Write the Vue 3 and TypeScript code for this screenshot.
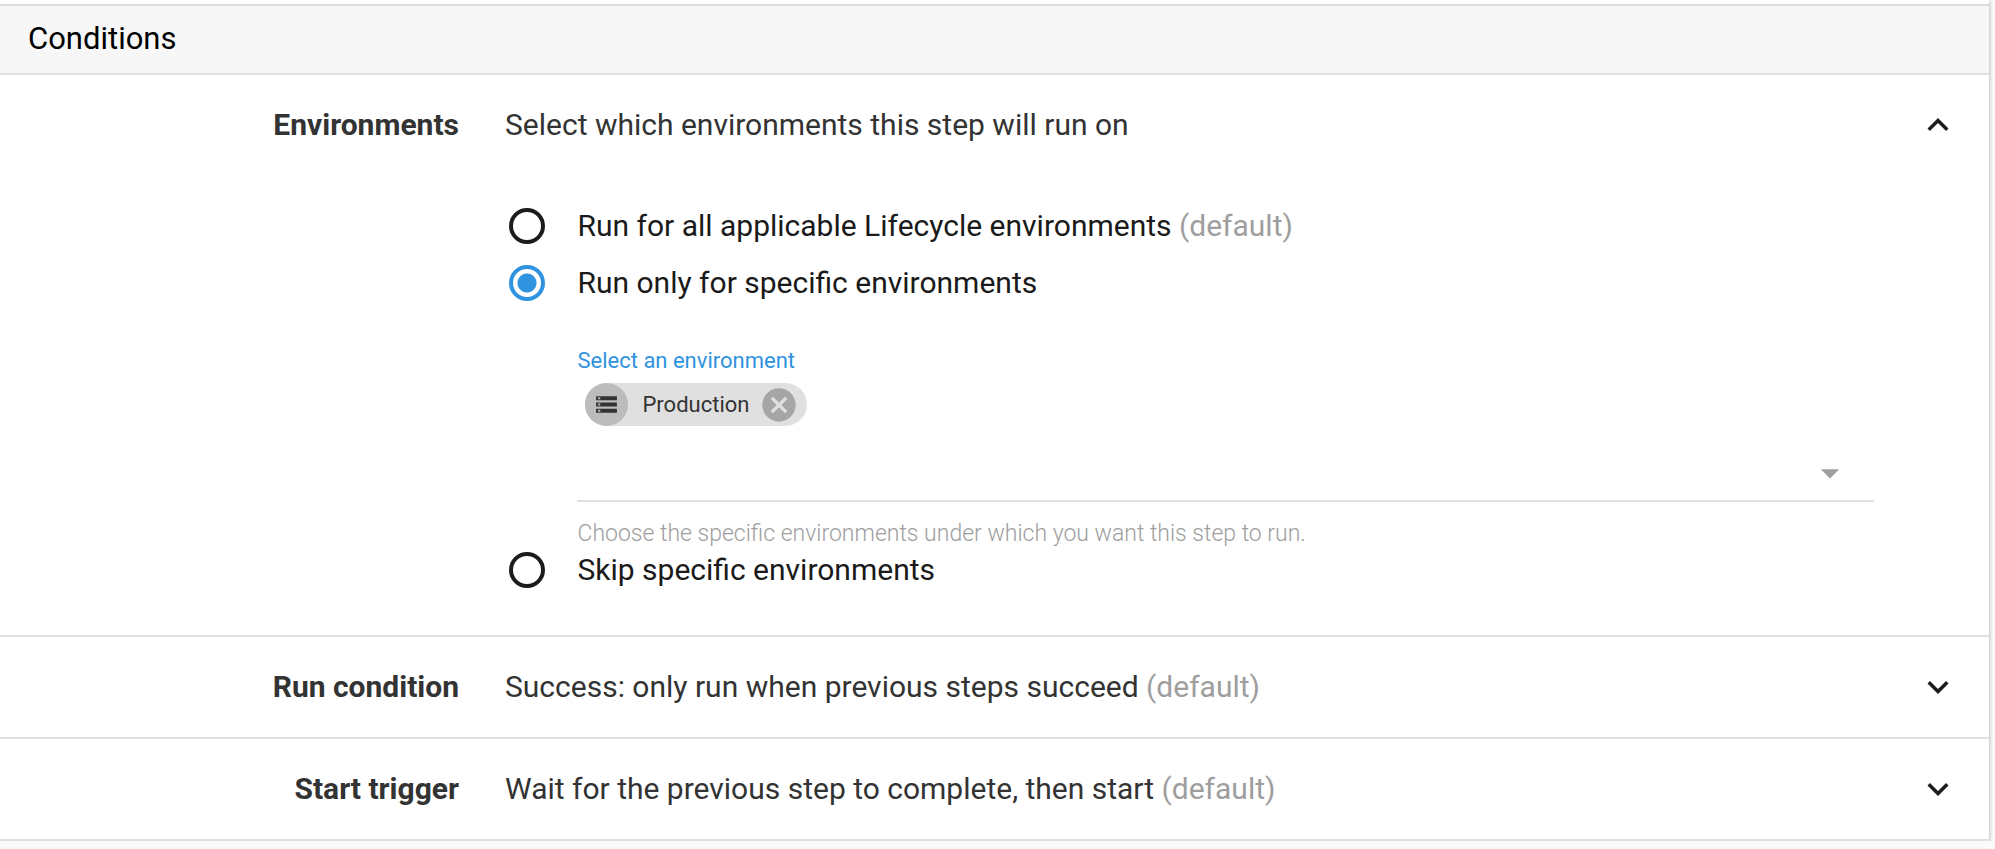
<script setup lang="ts">
import { computed, ref } from 'vue'

type Scope = 'all' | 'only' | 'skip'

interface ClosedSection {
  id: string
  title: string
  summary: string
}

const scope = ref<Scope>('only')
const expanded = ref(true)
const options = ['Production']
const selected = ref<string[]>(['Production'])
const pending = ref('')

const available = computed(() => options.filter((name) => !selected.value.includes(name)))

const closedSections: ClosedSection[] = [
  { id: 'run-condition', title: 'Run condition', summary: 'Success: only run when previous steps succeed' },
  { id: 'start-trigger', title: 'Start trigger', summary: 'Wait for the previous step to complete, then start' },
]

function addEnvironment(): void {
  if (pending.value) selected.value.push(pending.value)
  pending.value = ''
}

function removeEnvironment(name: string): void {
  selected.value = selected.value.filter((item) => item !== name)
}
</script>

<template>
  <main class="card">
    <h1 class="heading">Conditions</h1>

    <section class="section">
      <div class="row">
        <h2 class="title">Environments</h2>
        <p class="summary">Select which environments this step will run on</p>
        <button
          class="toggle"
          type="button"
          aria-label="Toggle Environments"
          :aria-expanded="expanded"
          @click="expanded = !expanded"
        >
          <svg class="icon" viewBox="0 0 24 24" aria-hidden="true">
            <path v-if="expanded" d="M12 8l-6 6 1.41 1.41L12 10.83l4.59 4.58L18 14z" />
            <path v-else d="M16.59 8.59L12 13.17 7.41 8.59 6 10l6 6 6-6z" />
          </svg>
        </button>
      </div>

      <div v-if="expanded" class="body">
        <label class="option">
          <input v-model="scope" class="radio" type="radio" name="scope" value="all" />
          <span>Run for all applicable Lifecycle environments <span class="muted">(default)</span></span>
        </label>
        <label class="option">
          <input v-model="scope" class="radio" type="radio" name="scope" value="only" />
          <span>Run only for specific environments</span>
        </label>

        <div v-if="scope !== 'all'" class="field">
          <label class="field-label" for="environment">Select an environment</label>
          <ul class="chips">
            <li v-for="name in selected" :key="name" class="chip">
              <span class="avatar">
                <svg class="storage" viewBox="0 0 24 24" aria-hidden="true">
                  <path d="M2 20h20v-4H2v4zm2-3h2v2H4v-2zM2 4v4h20V4H2zm4 3H4V5h2v2zm-4 7h20v-4H2v4zm2-3h2v2H4v-2z" />
                </svg>
              </span>
              <span class="chip-name">{{ name }}</span>
              <button class="remove" type="button" :aria-label="`Remove ${name}`" @click="removeEnvironment(name)">
                <svg class="cancel" viewBox="0 0 24 24" aria-hidden="true">
                  <path d="M12 2C6.47 2 2 6.47 2 12s4.47 10 10 10 10-4.47 10-10S17.53 2 12 2zm5 13.59L15.59 17 12 13.41 8.41 17 7 15.59 10.59 12 7 8.41 8.41 7 12 10.59 15.59 7 17 8.41 13.41 12 17 15.59z" />
                </svg>
              </button>
            </li>
          </ul>
          <div class="picker">
            <select id="environment" v-model="pending" class="select" @change="addEnvironment">
              <option value=""></option>
              <option v-for="name in available" :key="name" :value="name">{{ name }}</option>
            </select>
            <svg class="arrow" viewBox="0 0 24 24" aria-hidden="true"><path d="M7 10l5 5 5-5z" /></svg>
          </div>
          <p class="help">Choose the specific environments under which you want this step to run.</p>
        </div>

        <label class="option">
          <input v-model="scope" class="radio" type="radio" name="scope" value="skip" />
          <span>Skip specific environments</span>
        </label>
      </div>
    </section>

    <section v-for="item in closedSections" :key="item.id" class="section">
      <div class="row">
        <h2 class="title">{{ item.title }}</h2>
        <p class="summary">{{ item.summary }} <span class="muted">(default)</span></p>
        <button class="toggle" type="button" :aria-label="`Expand ${item.title}`" aria-expanded="false">
          <svg class="icon" viewBox="0 0 24 24" aria-hidden="true">
            <path d="M16.59 8.59L12 13.17 7.41 8.59 6 10l6 6 6-6z" />
          </svg>
        </button>
      </div>
    </section>
  </main>
</template>

<style>
body {
  background: #fafafa;
}
</style>

<style scoped>
.card {
  margin-right: 6px;
  padding-top: 4px;
  background: #fff;
  box-shadow: 0 1px 6px rgba(0, 0, 0, 0.12), 0 1px 4px rgba(0, 0, 0, 0.24);
  color: #333;
  font-family: Roboto, "Liberation Sans", sans-serif;
  font-size: 30px;
  line-height: 36px;
}

h1,
h2,
p,
ul {
  margin: 0;
  padding: 0;
  font-size: inherit;
}

button {
  display: flex;
  padding: 0;
  border: 0;
  background: none;
  cursor: pointer;
}

.heading {
  padding: 15px 28px 16px;
  border-top: 2px solid #dbdbdb;
  border-bottom: 2px solid #e0e0e0;
  background: #f7f7f7;
  color: #000;
  font-size: 31px;
  font-weight: 400;
}

.section {
  border-bottom: 2px solid #e0e0e0;
}

.row {
  display: grid;
  grid-template-columns: 23% 1fr auto;
  align-items: center;
  column-gap: 46px;
  padding: 29px 0 29px 2px;
}

.title {
  font-weight: 700;
  text-align: right;
}

.summary {
  min-width: 0;
}

.muted {
  color: #9e9e9e;
}

.toggle {
  margin-right: 30px;
}

.icon {
  width: 42px;
  height: 42px;
  fill: #1c1c1c;
}

.body {
  margin-left: 23%;
  padding: 30px 115px 44px 52px;
}

.option {
  display: flex;
  align-items: center;
  gap: 32px;
  height: 42px;
  color: #1a1a1a;
}

.option + .option {
  margin-top: 15px;
}

.radio {
  flex: none;
  width: 36px;
  height: 36px;
  margin: 0;
  border: 4px solid #1c1c1c;
  border-radius: 50%;
  background: #fff;
  appearance: none;
}

.radio:checked {
  border-color: #2f93e0;
  background: radial-gradient(circle, #2f93e0 9px, #fff 10px);
}

.field {
  padding: 41px 0 0 68px;
}

.field-label {
  display: block;
  color: #2f93e0;
  font-size: 22px;
  line-height: 32px;
}

.chips {
  display: flex;
  flex-wrap: wrap;
  gap: 8px;
  padding: 6px 8px;
  list-style: none;
}

.chip {
  display: flex;
  align-items: center;
  height: 43px;
  padding-right: 8px;
  border-radius: 22px;
  background: #e0e0e0;
  font-size: 22px;
}

.avatar {
  display: grid;
  place-items: center;
  width: 43px;
  height: 43px;
  border-radius: 50%;
  background: #bcbcbc;
}

.storage {
  width: 25px;
  height: 25px;
  fill: #333;
}

.chip-name {
  padding: 0 10px 0 14px;
}

.cancel {
  width: 40px;
  height: 40px;
  fill: #a6a6a6;
}

.picker {
  display: grid;
  align-items: center;
  border-bottom: 2px solid #e0e0e0;
}

.select {
  grid-area: 1 / 1;
  width: 100%;
  height: 68px;
  border: 0;
  background: transparent;
  color: inherit;
  font: inherit;
  appearance: none;
}

.arrow {
  grid-area: 1 / 1;
  align-self: end;
  justify-self: end;
  width: 44px;
  height: 44px;
  margin: 0 22px 5px 0;
  fill: #9e9e9e;
  pointer-events: none;
}

.help {
  padding-top: 17px;
  color: #9e9e9e;
  font-size: 23px;
  font-weight: 300;
  line-height: 30px;
}
</style>
